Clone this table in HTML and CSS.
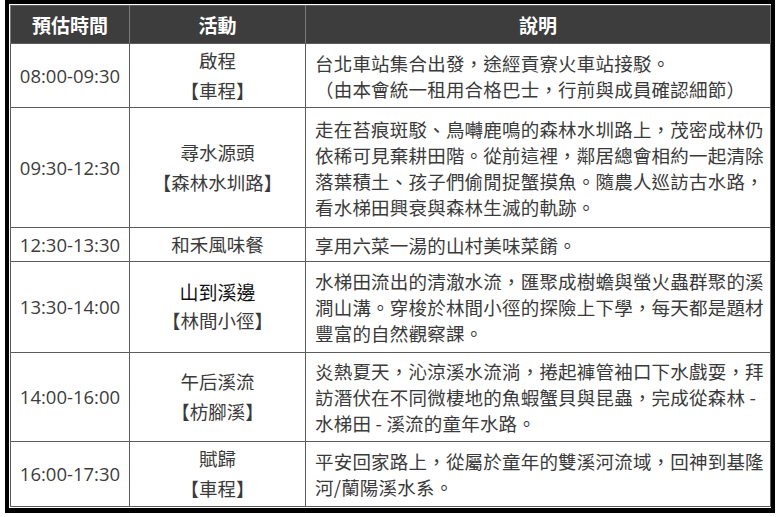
FILE: index.html
```html
<!DOCTYPE html>
<html lang="zh-TW">
<head>
<meta charset="utf-8">
<title>行程表</title>
<link rel="stylesheet" href="styles.css">
</head>
<body>
<div class="frame">
  <table class="schedule">
    <colgroup>
      <col class="c-time">
      <col class="c-act">
      <col class="c-desc">
    </colgroup>
    <thead>
      <tr class="rh">
        <th>預估時間</th>
        <th>活動</th>
        <th>說明</th>
      </tr>
    </thead>
    <tbody>
      <tr class="r1">
        <td class="time">08:00-09:30</td>
        <td class="act">啟程<br>【車程】</td>
        <td class="desc">台北車站集合出發，途經貢寮火車站接駁。<br>（由本會統一租用合格巴士，行前與成員確認細節）</td>
      </tr>
      <tr class="r2">
        <td class="time">09:30-12:30</td>
        <td class="act">尋水源頭<br>【森林水圳路】</td>
        <td class="desc">走在苔痕斑駁、鳥囀鹿鳴的森林水圳路上，茂密成林仍<br>依稀可見棄耕田階。從前這裡，鄰居總會相約一起清除<br>落葉積土、孩子們偷閒捉蟹摸魚。隨農人巡訪古水路，<br>看水梯田興衰與森林生滅的軌跡。</td>
      </tr>
      <tr class="r3">
        <td class="time">12:30-13:30</td>
        <td class="act">和禾風味餐</td>
        <td class="desc">享用六菜一湯的山村美味菜餚。</td>
      </tr>
      <tr class="r4">
        <td class="time">13:30-14:00</td>
        <td class="act act-tight"><span class="dark">山到溪邊</span><br>【林間小徑】</td>
        <td class="desc">水梯田流出的清澈水流，匯聚成樹蟾與螢火蟲群聚的溪<br>澗山溝。穿梭於林間小徑的探險上下學，每天都是題材<br>豐富的自然觀察課。</td>
      </tr>
      <tr class="r5">
        <td class="time">14:00-16:00</td>
        <td class="act">午后溪流<br>【枋腳溪】</td>
        <td class="desc">炎熱夏天，沁涼溪水流淌，捲起褲管袖口下水戲耍，拜<br>訪潛伏在不同微棲地的魚蝦蟹貝與昆蟲，完成從森林 -<br>水梯田 - 溪流的童年水路。</td>
      </tr>
      <tr class="r6">
        <td class="time">16:00-17:30</td>
        <td class="act">賦歸<br>【車程】</td>
        <td class="desc">平安回家路上，從屬於童年的雙溪河流域，回神到基隆<br>河/蘭陽溪水系。</td>
      </tr>
    </tbody>
  </table>
</div>
</body>
</html>
```

FILE: styles.css
```css
html, body {
  margin: 0;
  padding: 0;
  background: #ffffff;
}

body {
  font-family: "Open Sans", "Noto Sans CJK TC", "Noto Sans", sans-serif;
  color: #3a3a3a;
}

.frame {
  margin-left: 5px;
  width: 770px;
  box-sizing: border-box;
  border: 4px solid #000;
  border-top-width: 4px;
  border-bottom-width: 5px;
  padding: 1px;
  background: #ffffff;
}

.schedule {
  width: 760px;
  border-collapse: collapse;
  table-layout: fixed;
  border: 1px solid #8a8a8a;
}

.c-time { width: 119px; }
.c-act { width: 176px; }
.c-desc { width: 465px; }

.schedule th,
.schedule td {
  border: 1px solid #5c5c5c;
  padding: 0;
  vertical-align: middle;
}

.schedule th {
  background: #3d3d3d;
  color: #ffffff;
  font-weight: bold;
  font-size: 19px;
  line-height: 26px;
  text-align: center;
  padding-top: 3px;
  border-color: #5c5c5c #7a7a7a;
}

.rh { height: 38px; }
.r1 { height: 64px; }
.r2 { height: 120px; }
.r3 { height: 34px; }
.r4 { height: 91px; }
.r5 { height: 89px; }
.r6 { height: 65px; }

.schedule .time {
  text-align: center;
  font-size: 18.5px;
  line-height: 26px;
  color: #3c3c3c;
  white-space: nowrap;
}

.schedule .act {
  text-align: center;
  font-size: 18.5px;
  line-height: 30px;
  white-space: nowrap;
}

.schedule .act-tight {
  line-height: 28px;
}

.dark {
  color: #111;
  font-size: 19px;
}

.schedule .desc {
  font-family: "Noto Sans CJK TC", "Open Sans", sans-serif;
  font-feature-settings: "locl" 1;
  text-align: left;
  font-size: 18.5px;
  letter-spacing: 0.2px;
  line-height: 26px;
  padding-left: 9px;
  padding-right: 4px;
  white-space: nowrap;
}
```
